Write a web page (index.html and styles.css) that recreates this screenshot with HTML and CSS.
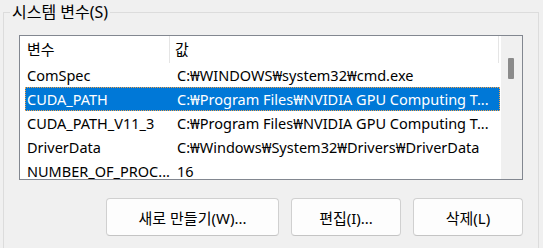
FILE: index.html
```html
<!DOCTYPE html>
<html lang="ko">
<head>
  <meta charset="UTF-8" />
  <title>시스템 변수</title>
  <link rel="stylesheet" href="styles.css">
</head>
<body>

  <fieldset class="group">
    <legend>시스템 변수(S)</legend>

    <div class="list">
      <div class="list-body">
        <div class="list-head">
          <div class="col-name">변수</div>
          <div class="col-value">값</div>
        </div>
        <div class="row">
          <div class="cell-name">ComSpec</div>
          <div class="cell-value">C:₩WINDOWS₩system32₩cmd.exe</div>
        </div>
        <div class="row selected">
          <div class="cell-name">CUDA_PATH</div>
          <div class="cell-value">C:₩Program Files₩NVIDIA GPU Computing T...</div>
        </div>
        <div class="row">
          <div class="cell-name">CUDA_PATH_V11_3</div>
          <div class="cell-value">C:₩Program Files₩NVIDIA GPU Computing T...</div>
        </div>
        <div class="row">
          <div class="cell-name">DriverData</div>
          <div class="cell-value">C:₩Windows₩System32₩Drivers₩DriverData</div>
        </div>
        <div class="row">
          <div class="cell-name">NUMBER_OF_PROC...</div>
          <div class="cell-value">16</div>
        </div>
      </div>
      <div class="scrollbar">
        <div class="thumb"></div>
      </div>
    </div>

    <div class="buttons">
      <button class="btn btn-wide">새로 만들기(W)...</button>
      <button class="btn">편집(I)...</button>
      <button class="btn">삭제(L)</button>
    </div>
  </fieldset>

</body>
</html>
```

FILE: styles.css
```css
body {
  margin: 0;
  background-color: #f0f0f0;
  font-family: "Noto Sans", "Noto Sans CJK KR", sans-serif;
  font-size: 15px;
  color: #000;
  overflow: hidden;
}

.group {
  margin: 1px 0 0 3px;
  width: 536px;
  padding: 0 0 20px;
  border: 1px solid #dcdcdc;
  box-sizing: border-box;
}

.group legend {
  margin-left: 6px;
  padding: 0 2px;
  line-height: 22px;
  font-size: 16px;
}

.list {
  display: flex;
  margin: 12px 0 0 15px;
  width: 504px;
  height: 145px;
  border: 1px solid #828790;
  box-sizing: border-box;
  background-color: #fff;
}

.list-body {
  flex: 1;
  overflow: hidden;
}

.list-head {
  display: flex;
  height: 27px;
  line-height: 27px;
}

.col-name {
  width: 150px;
  padding-left: 7px;
  box-sizing: border-box;
  border-right: 1px solid #e5e5e5;
}

.col-value {
  width: 329px;
  padding-left: 5px;
  box-sizing: border-box;
  border-right: 1px solid #e5e5e5;
}

.row {
  display: flex;
  margin-left: 5px;
  width: 475px;
  height: 24px;
  line-height: 24px;
  font-size: 14.5px;
  white-space: nowrap;
}

.row.selected {
  background-color: #0078d7;
  color: #fff;
  outline: 1px dotted #f3a24a;
  outline-offset: -1px;
}

.cell-name {
  width: 150px;
  padding-left: 2px;
  box-sizing: border-box;
  overflow: hidden;
}

.cell-value {
  flex: 1;
  padding-left: 2px;
  overflow: hidden;
  text-overflow: ellipsis;
}

.scrollbar {
  width: 21px;
  background-color: #f0f0f0;
}

.thumb {
  margin: 22px 0 0 7px;
  width: 6px;
  height: 21px;
  background-color: #8b8b8b;
  border-radius: 1px;
}

.buttons {
  display: flex;
  justify-content: flex-end;
  gap: 12px;
  margin: 18px 15px 0 0;
}

.btn {
  width: 110px;
  height: 38px;
  font-family: inherit;
  font-size: 15px;
  color: #000;
  background-color: #fdfdfd;
  border: 1px solid #d0d0d0;
  border-bottom-color: #c4c4c4;
  border-radius: 4px;
}

.btn-wide {
  width: 173px;
}
```
